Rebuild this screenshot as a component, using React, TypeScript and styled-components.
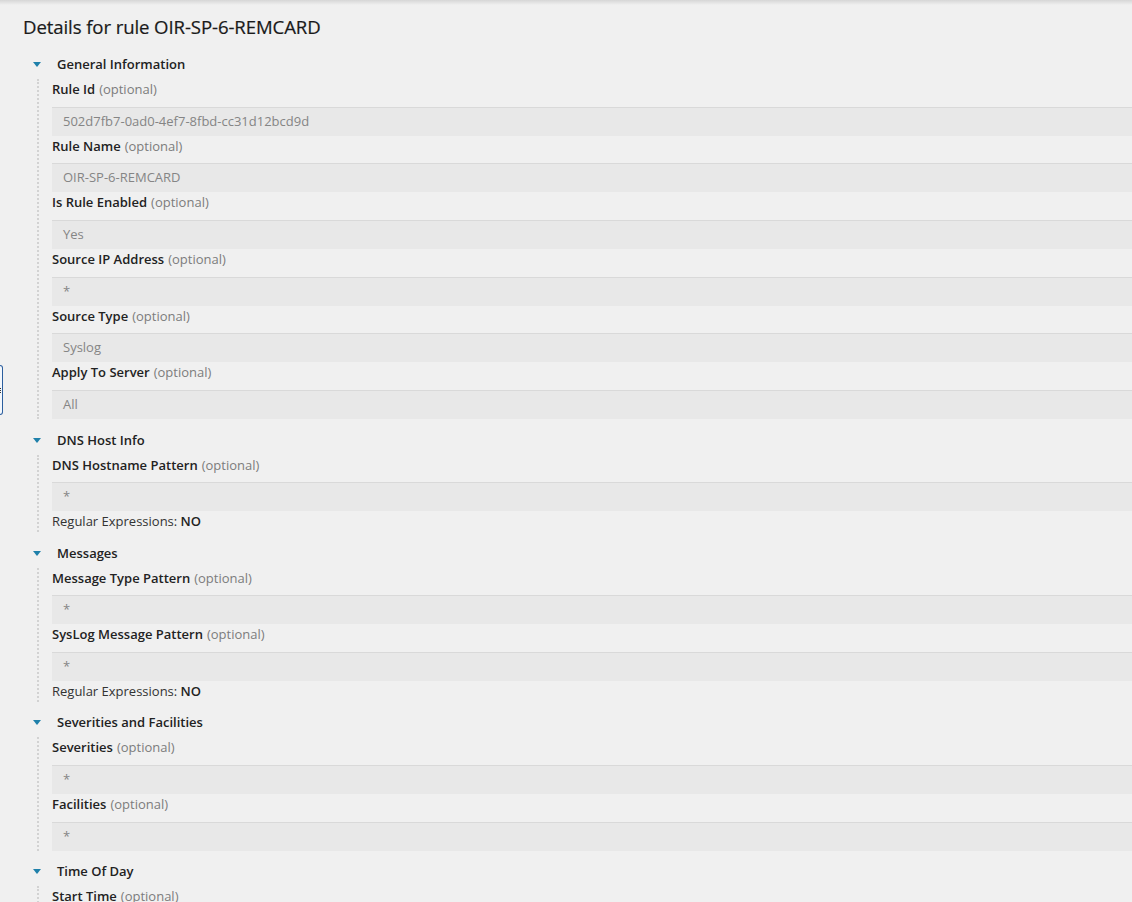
import React from "react";
import styled, { createGlobalStyle } from "styled-components";

const Global = createGlobalStyle`
  html, body { margin: 0; padding: 0; background: #f0f0f0; }
  body { font-family: "Open Sans", "Noto Sans", "Liberation Sans", sans-serif; color: #222; overflow: hidden; }
`;

const Page = styled.div`
  position: relative;
  width: 1132px;
  height: 902px;
  overflow: hidden;
  background: #f0f0f0;
`;

const TopShadow = styled.div`
  height: 5px;
  background: linear-gradient(#d6d6d6, #f0f0f0);
`;

const Content = styled.div`
  padding-left: 23px;
`;

const Title = styled.h1`
  margin: 9px 0 14px 0;
  font-size: 18.6px;
  line-height: 26px;
  font-weight: 400;
  color: #1a1a1a;
  letter-spacing: -0.1px;
  -webkit-text-stroke: 0.2px #1a1a1a;
`;

const Section = styled.section`
  margin-bottom: 10.4px;
`;

const SectionHeader = styled.div`
  display: flex;
  align-items: center;
  height: 20px;
  padding-left: 10px;
  gap: 16px;
  font-size: 13px;
  font-weight: 600;
  color: #222;
`;

const Caret = styled.span`
  width: 0;
  height: 0;
  border-left: 4px solid transparent;
  border-right: 4px solid transparent;
  border-top: 5px solid #1f80aa;
  margin-top: 1px;
`;

const SectionBody = styled.div`
  margin-left: 14px;
  margin-top: 5px;
  border-left: 2px dotted #d2d2d2;
  padding-left: 13px;
`;

const Label = styled.div`
  height: 20px;
  line-height: 20px;
  font-size: 13px;
  margin-bottom: 7.7px;
  white-space: nowrap;
`;

const LabelName = styled.span`
  font-weight: 600;
  color: #222;
`;

const Optional = styled.span`
  margin-left: 4px;
  color: #7c7c7c;
`;

const Input = styled.div`
  box-sizing: border-box;
  height: 29px;
  line-height: 26px;
  background: #e8e8e8;
  border-top: 1px solid #d9d9d9;
  padding-left: 11px;
  font-size: 13px;
  color: #858585;
  white-space: nowrap;
`;

const Note = styled.div`
  height: 21px;
  line-height: 20px;
  font-size: 13px;
  color: #333;
`;

const NoteValue = styled.span`
  font-weight: 600;
  color: #222;
`;

const Handle = styled.div`
  position: absolute;
  left: 0;
  top: 365px;
  width: 2px;
  height: 48px;
  border: 1px solid #2b5e9e;
  border-left: none;
  border-radius: 0 3px 3px 0;
  background: #f3f7fc;
  &::after {
    content: "";
    position: absolute;
    left: 0;
    top: 22px;
    width: 1px;
    height: 5px;
    background: repeating-linear-gradient(#333 0 1px, transparent 1px 2px);
  }
`;

type Field = { label: string; value: string };
type SectionData = { title: string; fields: Field[]; regex?: boolean };

const sections: SectionData[] = [
  {
    title: "General Information",
    fields: [
      { label: "Rule Id", value: "502d7fb7-0ad0-4ef7-8fbd-cc31d12bcd9d" },
      { label: "Rule Name", value: "OIR-SP-6-REMCARD" },
      { label: "Is Rule Enabled", value: "Yes" },
      { label: "Source IP Address", value: "*" },
      { label: "Source Type", value: "Syslog" },
      { label: "Apply To Server", value: "All" },
    ],
  },
  {
    title: "DNS Host Info",
    fields: [{ label: "DNS Hostname Pattern", value: "*" }],
    regex: true,
  },
  {
    title: "Messages",
    fields: [
      { label: "Message Type Pattern", value: "*" },
      { label: "SysLog Message Pattern", value: "*" },
    ],
    regex: true,
  },
  {
    title: "Severities and Facilities",
    fields: [
      { label: "Severities", value: "*" },
      { label: "Facilities", value: "*" },
    ],
  },
  {
    title: "Time Of Day",
    fields: [{ label: "Start Time", value: "" }],
  },
];

export default function App() {
  return (
    <Page>
      <Global />
      <TopShadow />
      <Content>
        <Title>Details for rule OIR-SP-6-REMCARD</Title>
        {sections.map((s) => (
          <Section key={s.title}>
            <SectionHeader>
              <Caret />
              <span>{s.title}</span>
            </SectionHeader>
            <SectionBody>
              {s.fields.map((f) => (
                <React.Fragment key={f.label}>
                  <Label>
                    <LabelName>{f.label}</LabelName>
                    <Optional>(optional)</Optional>
                  </Label>
                  <Input>{f.value}</Input>
                </React.Fragment>
              ))}
              {s.regex && (
                <Note>
                  Regular Expressions: <NoteValue>NO</NoteValue>
                </Note>
              )}
            </SectionBody>
          </Section>
        ))}
      </Content>
      <Handle />
    </Page>
  );
}
